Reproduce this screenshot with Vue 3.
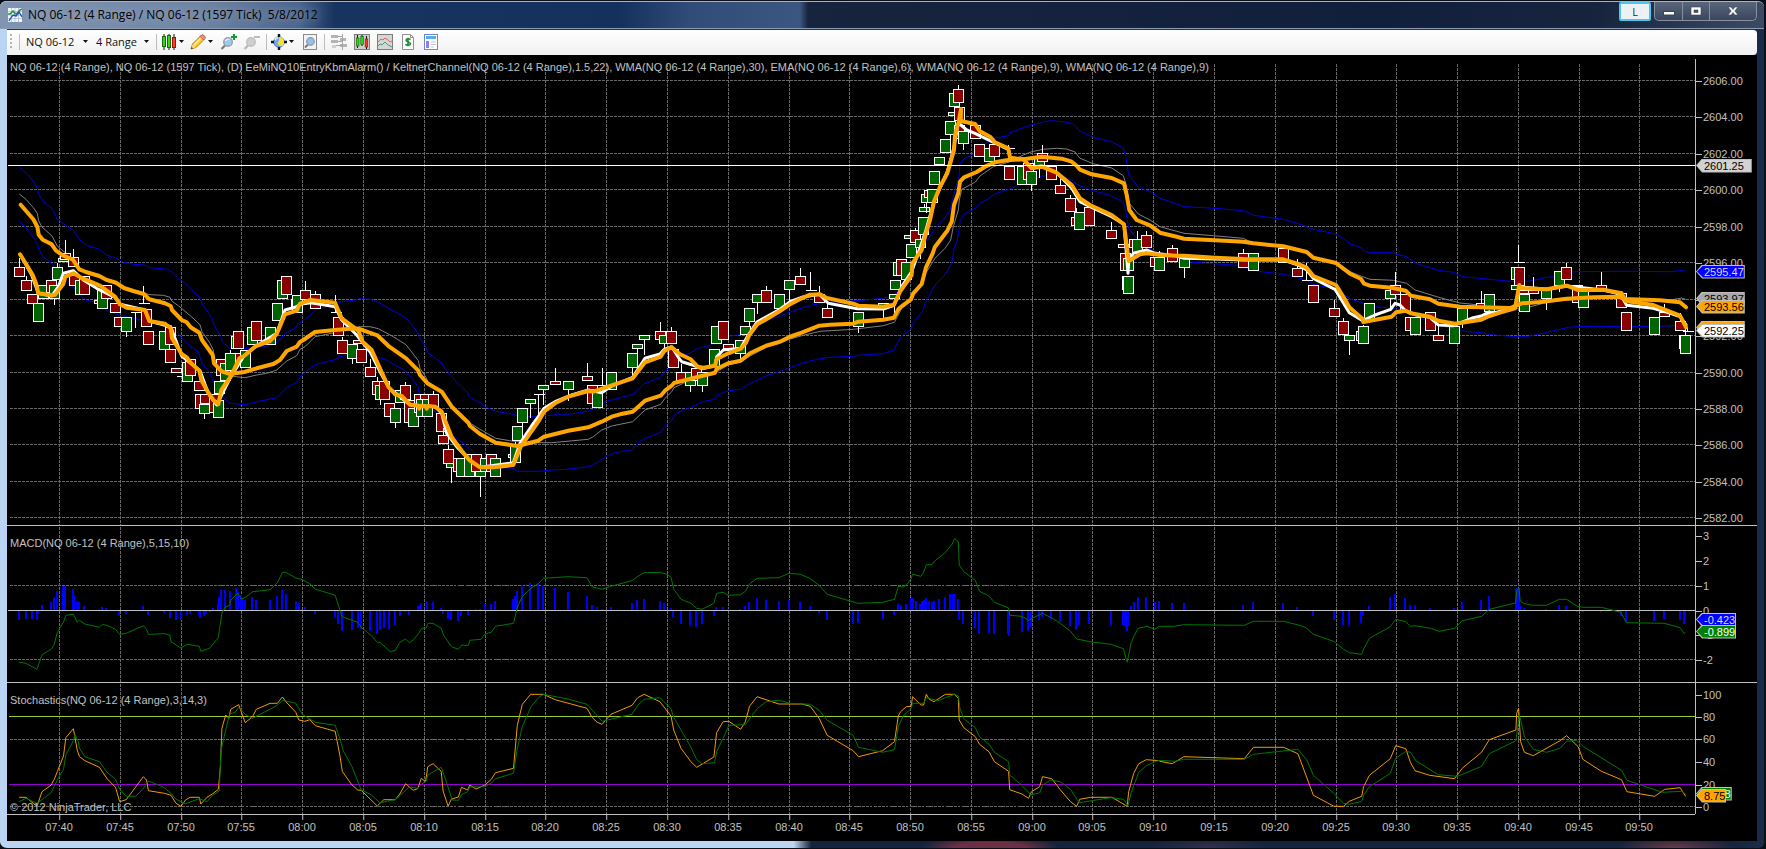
<script setup>
import { ref } from 'vue'

const instrument = ref('NQ 06-12')
const interval = ref('4 Range')

// Chart surface: every panel shares one horizontal scale.
const LEFT = 7
const WIDTH = 1688
const panels = {
  price: { top: 55, height: 470 },
  macd: { top: 525, height: 157 },
  stoch: { top: 682, height: 132 },
}
const box = (p) => `${LEFT - 0.5} ${p.top - 0.5} ${WIDTH} ${p.height}`
const pct = (y, p) => ((y - p.top + 0.5) / p.height) * 100 + '%'

const times = [
  ['07:40', 59], ['07:45', 120], ['07:50', 181], ['07:55', 241], ['08:00', 302], ['08:05', 363],
  ['08:10', 424], ['08:15', 485], ['08:20', 545], ['08:25', 606], ['08:30', 667], ['08:35', 728],
  ['08:40', 789], ['08:45', 849], ['08:50', 910], ['08:55', 971], ['09:00', 1032], ['09:05', 1092],
  ['09:10', 1153], ['09:15', 1214], ['09:20', 1275], ['09:25', 1336], ['09:30', 1396], ['09:35', 1457],
  ['09:40', 1518], ['09:45', 1579], ['09:50', 1639],
]
const timeLeft = (x) => ((x - LEFT) / WIDTH) * 100 + '%'

const priceTicks = [
  ['2606.00', 80], ['2604.00', 116], ['2602.00', 153], ['2600.00', 189], ['2598.00', 226],
  ['2596.00', 262], ['2594.00', 299], ['2592.00', 335], ['2590.00', 372], ['2588.00', 408],
  ['2586.00', 444], ['2584.00', 481], ['2582.00', 517],
]
const macdTicks = [['3', 535], ['2', 560], ['1', 585], ['0', 610], ['-1', 634], ['-2', 659]]
const stochTicks = [['100', 694], ['80', 716], ['60', 739], ['40', 761], ['20', 784], ['0', 806]]

const priceTags = [
  { text: '2601.25', y: 165, tone: 'light wide' },
  { text: '2595.47', y: 271, tone: 'blue' },
  { text: '2593.97', y: 298, tone: 'gray' },
  { text: '2593.56', y: 306, tone: 'orange' },
  { text: '2592.44', y: 327, tone: 'orange' },
  { text: '2592.25', y: 330, tone: 'white' },
]
const macdTags = [
  { text: '-0.423', y: 619, tone: 'blue' },
  { text: '-0.899', y: 631, tone: 'green' },
]
const stochTags = [
  { text: '11.88', y: 793, tone: 'green' },
  { text: '8.75', y: 795, tone: 'orange' },
]

// Series are stored in runs, each with its own origin and horizontal / vertical density.
const runs = {
  a: [0, 160, 3, 3], b: [300, 240, 3, 3], c: [620, 240, 3, 3], d: [860, 70, 3, 3],
  e: [1140, 200, 3, 3], f: [1460, 220, 3, 3],
  p: [0, 520, 2.613, 3], q: [580, 520, 2.613, 3], r: [1160, 520, 2.587, 3],
}
function line(parts) {
  const out = []
  for (const key of Object.keys(parts)) {
    const [ox, oy, kx, ky] = runs[key]
    for (const pair of parts[key].split(' ')) {
      const [x, y] = pair.split(',').map(Number)
      out.push((ox + (x - 1.5) / kx).toFixed(1) + ',' + (oy + (y - 1.5) / ky).toFixed(1))
    }
  }
  return out.join(' ')
}

const upper = line({
  a: '58,22 82,42 100,64 112,84 116,103 130,124 156,146 172,178 200,198 220,210 240,240 258,255 298,268 320,286 345,293 370,306 400,313 435,315 447,323 498,327 512,333 532,354 550,366 572,387 600,413 606,432 638,478 642,495 662,530 668,547 692,566 740,566 800,558 820,552 835,545 845,532 860,518 885,505 895,490',
  b: '0,248 28,228 50,208 75,202 105,188 135,184 162,181 178,176 210,178 235,186 270,207 318,234 335,254 355,280 360,296 378,322 384,338 425,370 440,392 468,424 482,438 503,458 508,470 540,488 555,500 587,514 640,523 652,528 700,530 755,526 770,523 815,522 862,514 885,506 915,486 935,480',
  c: '38,463 75,430 122,412 133,396 150,382 165,365 178,350 210,340 230,326 270,316 290,303 330,288 365,283 385,264 420,245 440,238 470,232 510,216 540,206 580,194 620,188 680,184 760,178 820,170',
  d: '115,660 135,628 150,612 160,590 180,570 195,520 230,470 250,450 270,420 285,360 297,320 300,280 308,270 345,250 365,228 405,204 445,197 450,188 490,173 520,163 540,160 550,155 572,152 610,155 640,162 660,184 700,202 755,215 790,234 797,260 806,314 835,352 870,364 900,385 950,402',
  e: '132,20 225,25 310,32 340,46 430,58 475,71 520,88 588,102 610,116 630,131 665,144 672,153 690,158 752,158 800,170 828,190 895,211 940,217 968,230 1020,235 1080,241',
  f: '150,184 205,184 250,174 290,168 340,155 500,154 630,155 660,152 672,152 677,157',
})
const lower = line({
  a: '58,184 80,205 100,232 112,250 116,268 130,292 150,306 160,318 172,335 190,360 215,375 240,405 258,420 285,426 300,435 320,452 360,466 410,476 440,485 500,498 520,505 535,520 550,540 572,560 595,575 606,610 630,640 642,670 650,700 668,712 690,730 735,734 770,725 830,713 860,683 890,667',
  b: '0,411 20,393 45,374 105,359 115,351 135,347 160,345 190,342 230,350 255,358 280,373 318,393 335,415 355,442 358,470 380,495 425,530 445,560 455,585 485,606 510,628 540,655 590,682 640,685 652,694 720,694 755,690 800,688 865,680 880,675 908,656 935,641',
  c: '0,635 38,629 55,607 75,595 122,577 133,560 155,542 162,526 178,516 210,503 245,486 283,478 290,466 325,452 362,448 390,430 440,407 475,396 508,383 545,370 598,356 630,352 700,349 715,346 790,341 822,329 832,309 845,288 873,267 878,250 908,214 915,190 940,145 945,135 975,105 995,70 1003,25 1012,0',
  d: '297,480 300,455 312,433 345,415 360,400 385,386 405,371 450,357 475,345 510,335 545,318 590,315 620,324 640,335 660,348 700,362 750,376 790,397 797,420 806,475 825,500 850,520 870,535 895,550',
  e: '60,160 132,185 200,190 295,196 345,213 430,223 465,231 500,240 520,253 588,267 610,283 630,297 665,308 680,318 740,323 790,330 830,350 870,365 900,377 940,387 970,394 1024,398 1050,404 1080,406',
  f: '150,349 205,349 250,340 290,330 330,321 400,319 540,320 620,318 670,315',
})
const middle = line({
  a: '58,102 78,118 100,143 112,160 116,182 125,200 156,228 172,258 192,275 220,300 240,328 300,350 345,372 370,388 430,400 450,404 490,406 510,412 515,423 535,437 572,468 600,494 606,515 630,550 640,570 642,595 662,625 690,648 735,653 770,645 800,640 830,630 860,603 890,587',
  b: '0,328 15,320 45,290 105,278 130,270 180,260 210,260 235,266 280,290 318,314 335,336 355,362 360,385 378,412 384,425 425,455 450,490 480,520 508,548 540,568 587,595 640,604 700,608 755,608 865,598 880,590 905,570 935,558',
  c: '0,553 38,545 75,510 122,493 135,475 155,455 162,443 190,430 245,405 285,398 325,375 362,366 390,348 440,322 475,312 508,298 545,287 600,274 700,268 790,257 823,247 832,230 845,205 873,182 878,165 908,130 918,98 945,55 975,25 992,0',
  d: '280,470 295,420 298,390 305,358 345,337 360,318 400,290 450,275 490,255 515,245 550,238 590,235 620,237 645,246 660,265 700,281 755,294 790,317 797,340 808,400 835,432 870,450 900,470 950,484',
  e: '132,100 220,107 310,115 340,130 430,140 500,158 520,172 588,190 630,215 665,229 690,238 760,241 800,250 825,270 900,293 960,309 1010,314 1080,323',
  f: '150,265 200,263 250,250 300,242 350,238 480,233 560,240 630,240 665,234 677,238',
})
const slow = line({
  a: '62,134 100,178 112,200 116,224 128,239 155,253 168,272 190,287 218,298 238,328 258,336 298,348 320,360 348,368 372,384 400,393 432,402 448,418 495,430 512,438 516,450 545,480 560,487 572,502 598,518 606,540 638,585 642,610 665,634 690,642 733,636 770,625 820,612 840,600 860,573 890,560',
  b: '0,306 10,300 45,276 105,270 150,266 175,266 232,286 268,320 318,355 355,392 360,405 382,430 425,455 455,500 505,548 510,558 540,582 587,608 652,618 715,602 732,590 805,572 865,562 905,545 935,530',
  c: '0,523 38,515 75,482 122,467 135,452 155,437 162,429 230,412 285,398 290,386 325,370 362,362 390,340 438,317 480,305 508,291 545,278 598,257 630,254 700,251 715,245 790,239 822,233 835,208 845,199 873,178 880,160 905,132',
  d: '198,592 218,550 224,532 262,482 275,455 282,405 295,370 300,335 312,322 350,306 375,290 405,277 440,271 490,268 545,260 605,266 635,275 650,287 660,299 695,313 755,324 792,340 800,375 808,420 830,450 870,466 900,488 950,500',
  e: '132,116 225,121 310,125 340,130 430,139 500,156 520,173 588,189 630,221 662,236 672,251 690,257 755,263 797,272 812,287 870,298 895,311 960,320 1080,323',
  f: '150,264 185,250 240,246 320,236 400,232 475,230 495,237 600,241 660,247 678,262',
})
const fast = line({
  a: '60,283 80,315 98,345 108,370 115,400 155,406 165,404 190,372 196,350 220,340 250,356 300,377 345,410 360,433 380,443 435,450 448,483 495,491 512,505 516,535 545,582 560,592 572,608 598,632 604,660 625,698 640,720 655,733 664,690 692,650 718,595 732,588 768,558 810,543 830,522 855,463 890,452',
  b: '0,191 32,180 105,188 125,235 175,272 188,305 215,330 265,440 285,463 305,468 330,494 355,497 358,506 362,497 378,500 380,506 384,498 405,500 425,515 455,592 485,632 508,660 540,682 580,682 640,675 662,620 715,545 732,515 765,490 805,470 865,453 880,455 915,443',
  c: '38,415 75,367 122,350 133,333 155,322 180,343 212,358 233,380 250,383 285,377 290,357 325,340 362,326 378,308 388,285 412,253 440,237 480,213 510,193 545,175 570,164 600,163 620,174 700,191 715,197 790,200 822,194',
  d: '120,665 155,615 157,580 185,540 195,500 210,450 222,395 240,350 262,310 272,275 282,240 285,195 296,155 303,117 302,153 345,162 360,184 390,200 405,217 445,235 450,263 490,268 515,295 545,290 590,308 635,345 660,385 690,405 755,435 792,463 798,510 806,573 840,553 860,550 900,555 950,557',
  e: '132,167 225,173 310,177 430,178 475,192 500,203 520,228 588,255 610,290 628,322 668,357 670,366 755,350 768,337 797,332 812,340 870,350 895,362 945,371 1024,359 1048,348 1080,338',
  f: '165,265 178,195 183,204 260,208 320,197 355,210 430,209 485,220 497,243 580,255 660,287 678,322',
})
const weighted = line({
  a: '60,283 95,345 115,400 155,408 175,380 190,340 220,332 250,360 290,385 345,412 360,433 435,450 448,483 512,500 545,588 600,632 625,700 650,735 690,655 732,588 768,558 830,520 855,450 890,440',
  b: '0,193 32,188 75,195 105,200 125,240 170,285 210,335 240,395 268,445 330,494 405,500 425,520 440,580 470,620 508,660 540,682 590,675 640,668 660,610 700,550 715,530 732,505 765,485 815,465 865,450 905,458 935,438',
  c: '38,412 75,355 120,342 133,328 155,320 175,352 185,365 215,374 245,386 285,377 290,350 310,330 362,325 385,285 412,245 480,208 510,185 545,172 598,163 625,190 712,206 790,207 822,196',
  d: '125,650 155,605 195,490 222,395 262,305 280,240 295,160 303,165 320,180 345,190 390,212 445,238 450,263 490,268 515,292 545,288 590,308 635,355 660,395 690,410 755,440 792,463 804,610 806,575 820,550 860,540 885,550 950,558',
  e: '132,175 225,177 310,180 430,180 475,195 500,210 520,235 585,268 628,338 668,362 705,345 752,328 765,310 780,315 797,333 830,345 870,352 895,375 940,377 1000,353 1024,348 1048,335',
  f: '80,285 165,262 178,200 260,208 320,198 430,210 480,222 500,256 580,265 615,275 660,290 680,318',
})

// Bars: centre, open/close edges, direction, optional wick top (^) and wick bottom (_).
const bars = {
  a: '58,321,350,r,^290 80,361,392,r,^346 98,402,432,r 115,429,486,g 130,375,418,g 153,361,400,r 163,375,418,g,_432 172,321,361,g,^306 190,295,307,g 197,280,300,r,^237 220,290,322,r,^264 223,345,377,r 240,361,404,g 254,348,404,r 298,419,432,r 307,390,446,g 320,375,418,r 346,429,459,r 358,472,500,r 380,472,515,g,_527 407,456,459,g,_500 430,430,433,g,^375 440,446,500,r 446,513,554,r 493,513,569,g 512,500,554,r 511,568,608,r 529,623,638,r 545,649,652,g 561,607,665,g 572,596,649,r 598,664,692,r 602,703,746,r 613,732,762,g,_774 617,703,732,r 642,703,760,r 656,720,773,g 665,596,649,r 677,610,664,g 658,664,703,g 691,580,634,g,^566 722,580,610,r 736,570,623,g 709,527,568,g 715,513,568,r 757,500,554,g 769,484,542,r 811,500,554,g 832,430,484,g 847,361,418,g 860,348,404,r 888,418,446,r 892,404,458,g 916,392,418,r,^361',
  b: '17,151,180,r,^120 46,163,206,r,^150 106,217,220,g,^162 116,232,287,r 127,300,342,r,^287 157,313,356,g,_368 175,300,313,r 185,328,368,r 211,381,410,r,^354 232,424,465,r,^408 240,436,480,g,_491 253,424,480,r 269,489,532,r 302,450,489,g 287,504,548,g,_560 329,480,548,r 317,436,480,r,^422 340,504,560,g 358,463,520,r 375,463,500,r 364,477,532,g 383,477,532,g 400,463,500,r,^450 423,520,575,r 430,586,613,r,^560 454,670,683,g,_725 445,628,672,r,^613 476,655,697,r 484,655,710,g 508,643,710,g 541,685,710,g,_768 530,643,697,r 556,655,697,g 575,643,697,r 587,655,710,g 639,643,655,r 647,616,670,g,^602 652,559,602,g 667,505,548,g,_560 691,478,491,g,_532 715,463,466,g,_520 730,436,451,g,_491 766,424,436,r,^381 805,424,451,g,_480 862,408,424,r,^366 907,436,439,g,^381 877,436,491,r 892,448,505,g 935,397,451,g 997,339,383,g,_410 1012,313,328,g,_339 1033,286,301,g,_342',
  c: '121,273,301,r,^243 133,286,313,g,_325 155,273,313,r,^258 160,328,383,r 184,397,424,r,^370 211,397,437,g,_452 230,383,424,r 247,397,437,g,_452 283,328,380,g 289,258,313,g 310,244,301,r 325,313,328,r 361,301,342,g,_356 376,258,286,g 388,205,245,g,_258 412,163,190,g,_219 440,151,190,r,^135 478,163,206,g 508,121,151,g,_190 541,108,136,r,^81 571,151,154,g,^93 598,163,190,r,^135 622,205,233,r,^190 715,217,260,g,_275 790,190,200,g,_233',
  d: '103,673,688,g,_740 106,631,661,g 115,577,619,g 124,567,619,r 140,577,631,g 148,496,508,g 155,523,565,g 167,481,520,r,^470 181,508,535,g,_565 190,442,496,g 193,411,426,g,^400 199,373,400,g,_426 207,360,385,r 217,358,400,g 223,304,346,g 238,262,286,g 256,208,250,g 270,154,196,g,_208 279,127,139,g 283,69,112,g 295,57,100,r,^42 299,165,208,r 299,112,154,r 310,182,223,g,_236 346,165,208,r,^154 358,223,262,r 388,235,277,g 404,223,262,r 445,235,238,g,^223 448,289,331,r 487,289,346,g 505,280,331,r 515,304,346,g,_360 538,262,289,g,_320 547,250,277,r,^223 575,289,331,r 601,346,373,r,^325 631,385,427,r,^371 649,442,469,r,^412 689,412,469,r 658,427,481,g 755,481,508,r,^454 790,523,535,r 823,508,535,r 832,508,550,g,^481 859,496,535,r,^480 795,550,604,r 806,565,604,g 803,619,661,g 805,619,673,g 885,562,592,r 898,562,604,g,^540 937,535,577,r,^521',
  e: '133,175,203,g,_230 310,160,203,r,^145 341,160,214,g 430,145,188,r,^132 472,203,230,r,^175 500,241,244,g,^187 520,256,310,r 583,325,352,r,^297 610,364,406,r,^350 628,406,422,g,_461 665,394,422,r 670,379,433,g,^372 688,310,366,g 751,271,298,g,_330 767,256,285,r,^214 797,283,337,r 811,350,394,r 826,352,406,g 871,337,394,r 895,406,422,r,^375 943,379,433,g 968,325,365,g,_380 1024,310,322,r,^270 1048,283,337,g',
  f: '168,142,180,g 168,196,211,g 175,127,130,g,^72 179,142,197,r 190,209,222,r 194,222,277,g 221,209,222,r,^169 260,205,238,g,_266 298,154,197,g,_212 320,142,181,r,^127 352,196,250,r 371,211,265,g 424,196,211,r,^154 485,220,265,r,^210 500,277,334,r 583,292,346,g 614,277,292,r,^248 660,304,334,r,^275 683,334,337,g,^320 674,346,388,g 677,346,401,g,^325',
}
const candles = []
for (const key of Object.keys(bars)) {
  const [ox, oy] = runs[key]
  for (const item of bars[key].split(' ')) {
    const [cx, top, bottom, dir, wick] = item.split(',')
    const x = ox + Math.floor(cx / 3)
    const y = oy + Math.round(top / 3)
    const h = Math.max(0, oy + Math.round(bottom / 3) - y - 1)
    const end = wick ? oy + Math.round(wick.slice(1) / 3) : 0
    candles.push({ x, y, h, dir, wick: wick ? (wick[0] === '^' ? [end, y] : [y + h, end]) : null })
  }
}

const histogramData = {
  p: '50,299 68,297 83,297 97,299 99,282 109,255 134,246 142,231 149,213 165,197 169,197 190,207 194,228 202,243 207,246 220,258 259,267 266,262 277,264 302,273 311,285 330,281 374,258 387,285 429,279 444,293 460,299 473,299 489,285 497,281 520,285 523,293 533,288 539,282 549,276 557,264 570,252 573,231 578,210 588,210 600,213 616,205 622,216 631,225 633,237 641,240 659,231 669,240 706,240 725,228 737,209 747,222 774,243 780,250 797,262 824,281 876,291 884,312 894,333 920,330 936,324 944,327 967,333 986,342 993,330 1003,324 1017,327 1032,315 1045,288 1058,276 1069,285 1080,273 1092,258 1096,258 1101,249 1116,243 1132,247 1153,264 1158,281 1171,297 1178,299 1196,303 1205,288 1222,285 1226,268 1244,267 1255,267 1267,252 1284,252 1293,243 1341,237 1345,228 1351,213 1364,196 1385,189 1406,192 1418,195 1451,205 1484,216 1534,228 1547,256 1560,262',
  q: '58,267 81,262 136,249 149,240 168,237 209,243 219,249 237,264 243,291 264,312 287,315 303,321 319,312 350,288 355,262 374,262 386,268 418,268 431,258 441,246 463,234 487,240 520,243 547,240 575,246 601,258 624,279 646,299 714,312 726,309 791,297 821,285 830,252 838,255 852,252 865,235 869,234 878,243 888,252 894,243 899,240 904,234 912,243 920,246 925,243 938,237 953,231 966,222 974,222 977,222 988,237 991,299 1001,312 1033,324 1042,342 1069,339 1082,342 1118,342 1122,348 1155,336 1170,333 1178,321 1200,299 1207,291 1230,297 1254,306 1280,318 1297,330 1304,315 1330,312 1387,315 1418,315 1422,318 1426,323 1430,333 1433,315 1440,258 1447,246 1459,231 1480,231 1502,246 1513,243 1547,249',
  r: '62,249 214,255 240,246 318,249 354,261 395,288 450,299 473,315 489,315 520,309 525,288 541,258 595,231 608,222 635,234 647,255 659,255 698,264 719,273 760,264 781,246 830,240 851,228 921,207 924,205 928,205 932,258 941,264 998,268 1033,255 1050,258 1078,276 1094,276 1140,276 1192,288 1205,306 1278,303 1304,297 1346,299 1355,312 1358,299',
}
const histogram = []
for (const key of Object.keys(histogramData)) {
  const [ox, oy, kx] = runs[key]
  for (const item of histogramData[key].split(' ')) {
    const [x, y] = item.split(',').map(Number)
    const end = oy + Math.round(y / 3)
    histogram.push({ x: Math.round(ox + x / kx) - 1.5, y: Math.min(end, 610) - 0.5, h: Math.max(1, Math.abs(end - 610)) })
  }
}

const macd = line({
  p: '50,427 68,430 97,448 110,404 134,388 142,373 150,337 166,306 172,286 192,283 202,307 208,301 222,312 260,322 268,313 282,317 302,328 313,343 330,340 375,317 383,328 388,343 430,341 444,345 447,365 473,384 490,373 521,379 525,394 548,385 571,353 574,325 580,280 588,262 600,256 604,240 621,220 631,237 642,232 660,215 706,209 725,188 738,157 747,157 773,174 790,179 808,190 824,207 876,226 894,290 935,307 944,322 970,346 986,367 993,367 1020,395 1033,391 1045,367 1060,357 1070,368 1080,360 1095,339 1102,325 1114,324 1118,310 1132,310 1153,325 1160,347 1180,380 1198,388 1206,376 1224,376 1228,361 1257,358 1267,342 1284,337 1295,319 1342,310 1352,262 1365,229 1390,203 1407,191 1420,175 1484,170 1534,173 1547,200 1568,207',
  q: '58,208 81,199 136,182 150,170 168,158 209,157 228,163 238,172 245,207 264,238 290,250 305,265 319,268 350,250 357,220 374,217 387,226 420,224 432,214 443,192 463,175 520,173 546,160 577,163 602,176 625,196 646,223 726,250 791,247 822,238 832,199 845,201 855,193 866,175 869,163 891,169 898,157 905,134 920,134 927,123 953,100 973,72 979,56 989,65 991,135 1003,155 1033,181 1044,214 1069,228 1083,247 1120,264 1123,286 1155,289 1172,301 1208,280 1233,294 1255,310 1282,334 1298,357 1333,365 1387,373 1420,386 1430,427 1440,370 1447,350 1459,325 1482,319 1502,328 1513,319',
  r: '0,319 36,319 62,314 218,316 242,304 320,304 358,315 378,323 397,343 452,365 475,388 490,398 522,403 527,387 542,355 596,320 610,298 636,305 648,319 660,317 700,325 722,334 762,325 782,302 832,289 852,268 920,249 924,210 929,205 932,243 940,250 965,256 1000,256 1033,238 1052,238 1080,259 1094,262 1142,262 1192,277 1207,308 1305,310 1346,323 1356,341 1360,337',
})
const stochK = line({
  p: '50,832 68,832 97,859 110,815 134,795 142,778 150,755 166,708 172,653 192,626 202,690 208,710 222,722 260,742 280,776 302,802 313,845 330,839 375,770 383,780 388,812 430,820 447,826 460,850 473,859 485,840 497,832 521,832 525,852 541,832 555,822 571,808 576,740 580,625 590,585 598,595 603,568 624,554 641,608 660,590 670,568 706,550 725,550 738,531 748,546 773,577 781,600 797,604 810,599 824,617 876,634 888,705 895,755 920,795 935,810 944,811 986,858 1003,839 1033,839 1045,822 1060,791 1080,811 1092,806 1101,775 1112,785 1118,740 1132,731 1153,754 1158,813 1171,858 1180,837 1198,831 1206,802 1222,810 1228,795 1244,807 1267,795 1284,778 1295,758 1342,745 1352,616 1365,553 1387,523 1420,523 1451,539 1534,565 1547,592',
  q: '45,607 58,613 81,583 136,556 151,533 168,523 209,545 238,588 245,630 264,685 290,725 305,742 350,711 357,638 374,605 389,604 420,628 432,605 443,559 463,530 520,552 580,552 602,559 625,595 646,646 714,692 728,710 791,692 822,665 832,588 838,575 853,560 866,559 869,530 891,555 898,555 905,523 912,537 925,545 955,523 979,523 989,535 991,600 1003,623 1033,650 1044,673 1069,695 1083,725 1120,754 1123,809 1155,822 1172,835 1180,815 1201,800 1209,770 1233,776 1255,809 1282,845 1298,859 1306,838 1335,832 1390,832 1430,859 1434,815 1447,760 1460,731 1480,719 1515,722',
  r: '0,724 32,731 62,710 218,716 242,682 320,682 357,701 397,826 450,859 475,859 490,844 522,829 527,800 542,766 596,716 610,677 636,686 648,727 660,752 698,766 762,776 782,745 832,697 852,659 921,630 923,580 928,565 933,665 943,697 966,707 1035,662 1052,647 1082,680 1094,718 1142,754 1194,779 1208,815 1280,829 1306,808 1346,803 1360,829',
})
const stochD = line({
  p: '50,845 68,835 97,850 134,818 150,780 166,748 172,705 192,662 196,643 205,665 208,685 222,710 260,725 280,757 302,778 313,808 330,829 355,829 375,805 388,783 430,803 447,820 460,838 485,851 521,836 541,845 555,827 573,813 578,690 590,630 600,583 615,576 624,562 641,583 660,595 725,556 738,541 773,550 790,583 824,607 876,616 888,655 897,692 920,740 944,810 970,824 993,848 1033,839 1070,801 1092,805 1101,793 1114,783 1118,765 1153,742 1158,757 1182,840 1198,841 1206,824 1222,815 1228,801 1267,800 1284,790 1295,776 1342,760 1352,685 1365,620 1387,562 1407,533 1420,523 1484,537 1534,553',
  q: '58,604 136,583 151,556 168,538 209,533 238,566 245,592 290,682 305,719 319,731 352,728 357,695 374,655 389,616 432,614 463,566 487,545 520,541 550,550 602,553 625,571 646,601 714,646 728,682 791,697 822,689 832,620 845,587 866,565 869,550 898,550 905,533 935,542 955,533 979,523 989,528 993,565 1003,596 1033,623 1044,650 1069,673 1083,697 1120,725 1123,765 1155,796 1178,824 1201,819 1209,796 1230,780 1255,785 1282,808 1304,848 1387,833 1420,838 1432,857 1440,820 1460,757 1480,737 1502,725 1515,721',
  r: '0,721 40,724 62,718 218,718 242,703 357,688 380,720 397,766 452,822 475,850 490,853 522,844 527,825 542,800 596,760 610,715 636,694 648,697 662,722 720,764 770,769 832,739 852,701 921,662 930,583 943,650 966,688 1000,697 1035,685 1052,664 1078,661 1096,680 1194,751 1208,781 1300,817 1350,814 1360,822',
})
</script>

<template>
  <main class="window">
    <header class="titlebar">
      <svg class="app-icon" viewBox="0 0 14 14" aria-hidden="true">
        <rect width="14" height="14" fill="#f4f6fb" />
        <path d="M3.500 0v14M7 0v14M10.500 0v14M0 3.500h14M0 7h14M0 10.500h14" stroke="#a9b3d6" stroke-width=".7" />
        <path d="M0 6h2l3-3 2 2.500h2L12 2l2-1" stroke="#1c9a3f" stroke-width="1.600" fill="none" />
        <path d="M1 13l3-5 2-1 2 1 3-4 3 5" stroke="#2450b4" stroke-width="1.400" fill="none" />
      </svg>
      <h1 class="title">NQ 06-12 (4 Range) / NQ 06-12 (1597 Tick)&nbsp; 5/8/2012</h1>
      <button class="link-button" type="button">L</button>
      <div class="controls">
        <button class="min" type="button" aria-label="Minimize">
          <svg width="12" height="10" viewBox="0 0 12 10"><rect x=".5" y="5.500" width="11" height="3.500" fill="#fff" stroke="#3c4352" /></svg>
        </button>
        <button class="max" type="button" aria-label="Maximize">
          <svg width="12" height="10" viewBox="0 0 12 10"><path fill-rule="evenodd" d="M1 1h10v8H1zM4 4v2.500h4V4z" fill="#fff" stroke="#3c4352" stroke-width=".6" /></svg>
        </button>
        <button class="close" type="button" aria-label="Close">
          <svg width="12" height="10" viewBox="0 0 12 10"><path d="M1 1h3l2 2.500L8 1h3L7.800 5 11 9H8L6 6.500 4 9H1l3.200-4z" fill="#fff" stroke="#3c4352" stroke-width=".6" /></svg>
        </button>
      </div>
    </header>

    <nav class="toolbar" aria-label="Chart tools">
      <span class="grip"></span>
      <span class="sep"></span>
      <label class="pick pick-instrument">
        <select v-model="instrument" aria-label="Instrument"><option>NQ 06-12</option></select>
        <span class="caret"></span>
      </label>
      <label class="pick pick-interval">
        <select v-model="interval" aria-label="Interval"><option>4 Range</option></select>
        <span class="caret"></span>
      </label>
      <span class="sep"></span>
      <button class="tool split" type="button" aria-label="Chart style">
        <svg viewBox="0 0 16 16">
          <path d="M3 0v16M8 0v16M13 0v16" stroke="#111" />
          <rect x="1.500" y="2.500" width="3" height="10" fill="#35d51d" stroke="#176b10" />
          <rect x="6.500" y="1.500" width="3" height="12" fill="#35d51d" stroke="#176b10" />
          <rect x="11.500" y="3.500" width="3" height="10" fill="#f5402c" stroke="#9c1408" />
        </svg>
        <span class="caret"></span>
      </button>
      <button class="tool split" type="button" aria-label="Drawing tools">
        <svg viewBox="0 0 16 16">
          <path d="M1 15l1.500-5L11 1.500 14.500 5 6 13.500z" fill="#ffcf22" stroke="#b97a10" />
          <path d="M4 11l8-8" stroke="#fff2a0" stroke-width="1.500" />
          <path d="M10 2.500l1.500-1.500a1.500 1.500 0 0 1 2 0l1.500 1.500a1.500 1.500 0 0 1 0 2L13.500 6z" fill="#e88f86" stroke="#a34d33" stroke-width=".7" />
          <path d="M1 15l1.300-4.500 3.200 3.200z" fill="#f3d7a3" />
          <path d="M1 15l.6-2 1.500 1.500z" fill="#222" />
        </svg>
        <span class="caret"></span>
      </button>
      <button class="tool" type="button" aria-label="Zoom in">
        <svg viewBox="0 0 16 16">
          <path d="M0.500 15L4.500 11" stroke="#777" stroke-width="2.200" />
          <circle cx="7" cy="8" r="4.300" fill="#9cc9ee" stroke="#9aa0a8" stroke-width="1.400" />
          <path d="M4.500 7a3 3 0 0 1 4-1.500" stroke="#e2f2ff" stroke-width="1.300" fill="none" />
          <path d="M13 0v6M10 3h6" stroke="#12a02a" stroke-width="2" />
        </svg>
      </button>
      <button class="tool" type="button" aria-label="Zoom out" disabled>
        <svg viewBox="0 0 16 16">
          <path d="M0.500 15L4.500 11" stroke="#b5b5b5" stroke-width="2.200" />
          <circle cx="7" cy="8" r="4.300" fill="#cfcfcf" stroke="#c0c0c0" stroke-width="1.400" />
          <path d="M10 3h6" stroke="#bdbdbd" stroke-width="2" />
        </svg>
      </button>
      <span class="sep"></span>
      <button class="tool split" type="button" aria-label="Crosshair">
        <svg viewBox="0 0 16 16">
          <circle cx="8" cy="8" r="5.300" fill="#7aa9e8" stroke="#3a5fa8" stroke-width=".8" />
          <path d="M8 2.700a5.300 5.300 0 0 1 3 9.600C7 12 6 9 8 7z" fill="#f1e03c" />
          <path d="M4 6a4 4 0 0 1 3-2.500" stroke="#dcecff" stroke-width="1.500" fill="none" />
          <path d="M8 0v3M8 13v3M0 8h3M13 8h3" stroke="#111" stroke-width="2.400" />
        </svg>
        <span class="caret"></span>
      </button>
      <button class="tool" type="button" aria-label="Zoom to data">
        <svg viewBox="0 0 16 16">
          <rect x="1.500" y=".5" width="13" height="15" fill="#f2f2f2" stroke="#8b8b8b" />
          <path d="M3 13.500l3-3" stroke="#777" stroke-width="2" />
          <circle cx="8.500" cy="7.500" r="3.800" fill="#8fc2ec" stroke="#8d98a5" stroke-width="1.200" />
        </svg>
      </button>
      <span class="sep"></span>
      <button class="tool" type="button" aria-label="Chart trader" disabled>
        <svg viewBox="0 0 16 16">
          <path d="M0 1h7v3H0zM9 4h6v3H9zM0 6h7v3H0zM9 10h7v3H9z" fill="#b4b4b4" />
          <path d="M7 2.500h4.500M7 7.500h4.500M5 11.500h6M11.500 0v16" stroke="#a6a6a6" />
          <path d="M1 11h4v3H1z" fill="#d0d0d0" />
        </svg>
      </button>
      <button class="tool" type="button" aria-label="Data series">
        <svg viewBox="0 0 16 16">
          <rect x=".5" y=".5" width="15" height="15" fill="#cdcdcd" stroke="#7d7d7d" />
          <path d="M3.500 1v13M8 1v11M12.500 2v13" stroke="#111" />
          <rect x="2.500" y="4" width="2.500" height="8" fill="#35d51d" stroke="#176b10" stroke-width=".7" />
          <rect x="6.800" y="2.500" width="2.500" height="8" fill="#35d51d" stroke="#176b10" stroke-width=".7" />
          <rect x="11.200" y="5" width="2.500" height="8" fill="#f5402c" stroke="#9c1408" stroke-width=".7" />
        </svg>
      </button>
      <button class="tool" type="button" aria-label="Indicators">
        <svg viewBox="0 0 16 16">
          <rect x=".5" y=".5" width="15" height="15" fill="#d6d6d6" stroke="#7d7d7d" />
          <path d="M1 8l3-3 2 1 2-2 3 2 2 2 2-1" stroke="#e06464" fill="none" />
          <path d="M1 12l2-2 2 1 3-3 3 3 4 2" stroke="#3fa36b" fill="none" />
        </svg>
      </button>
      <button class="tool" type="button" aria-label="Strategies">
        <svg viewBox="0 0 16 16">
          <path d="M2.500.5h8l3 3v12h-11z" fill="#fff" stroke="#909090" />
          <path d="M10.500.5v3h3" fill="none" stroke="#909090" />
          <path d="M10.500 5.500c-1-1.200-4.500-1-4.500.8S10.500 8 10.500 9.800 6.500 11.700 5.500 10.300M8 3.800v8.500" fill="none" stroke="#168a2a" stroke-width="1.500" />
        </svg>
      </button>
      <button class="tool" type="button" aria-label="Properties">
        <svg viewBox="0 0 16 16">
          <rect x="1.500" y=".5" width="13" height="15" fill="#fff" stroke="#6f86c8" />
          <path d="M3 2h10v3H3z" fill="#58aee8" />
          <path d="M4.500 7v7" stroke="#8f7ff0" stroke-width="3" />
          <path d="M8 8h5M8 10.500h5M8 13h3" stroke="#b9c4dd" />
        </svg>
      </button>
    </nav>

    <section class="chart" aria-label="Chart">
      <div class="panel">
        <svg class="plot" :viewBox="box(panels.price)" preserveAspectRatio="none">
          <g class="grid">
            <path v-for="t in times" :key="t[0]" :d="`M${t[1]} 63V525`" />
            <path v-for="t in priceTicks" :key="t[0]" :d="`M9 ${t[1]}H1694`" />
          </g>
          <polyline class="band" :points="upper" />
          <polyline class="band" :points="lower" />
          <polyline class="mid" :points="middle" />
          <g v-for="(c, i) in candles" :key="i" class="candle">
            <path v-if="c.wick" :d="`M${c.x} ${c.wick[0]}V${c.wick[1]}`" />
            <rect v-if="c.h > 0" :class="c.dir" :x="c.x - 5" :y="c.y" width="10" :height="c.h" />
            <path v-else :d="`M${c.x - 5} ${c.y}H${c.x + 6}`" />
          </g>
          <polyline class="weighted" :points="weighted" />
          <polyline class="average" :points="slow" />
          <polyline class="average" :points="fast" />
          <path class="level" d="M7 165H1695" />
        </svg>
        <p class="caption">NQ 06-12 (4 Range), NQ 06-12 (1597 Tick), (D) EeMiNQ10EntryKbmAlarm() / KeltnerChannel(NQ 06-12 (4 Range),1.5,22), WMA(NQ 06-12 (4 Range),30), EMA(NQ 06-12 (4 Range),6), WMA(NQ 06-12 (4 Range),9), WMA(NQ 06-12 (4 Range),9)</p>
      </div>
      <div class="axis axis-first">
        <span v-for="t in priceTicks" :key="t[0]" class="tick" :style="{ top: pct(t[1], panels.price) }">{{ t[0] }}</span>
        <span v-for="t in priceTags" :key="t.text" class="tag" :class="t.tone" :style="{ top: pct(t.y, panels.price) }"><b>{{ t.text }}</b></span>
      </div>

      <div class="panel ruled">
        <svg class="plot" :viewBox="box(panels.macd)" preserveAspectRatio="none">
          <g class="grid">
            <path v-for="t in times" :key="t[0]" :d="`M${t[1]} 526V682`" />
            <path d="M9 585H1694M9 659H1694" />
          </g>
          <rect v-for="(b, i) in histogram" :key="i" class="bar" :x="b.x" :y="b.y" width="2" :height="b.h" />
          <path class="zero" d="M7 610H1695" />
          <polyline class="green-line" :points="macd" />
        </svg>
        <p class="caption caption-lower">MACD(NQ 06-12 (4 Range),5,15,10)</p>
      </div>
      <div class="axis ruled">
        <span v-for="t in macdTicks" :key="t[0]" class="tick" :style="{ top: pct(t[1], panels.macd) }">{{ t[0] }}</span>
        <span v-for="t in macdTags" :key="t.text" class="tag" :class="t.tone" :style="{ top: pct(t.y, panels.macd) }"><b>{{ t.text }}</b></span>
      </div>

      <div class="panel ruled">
        <svg class="plot" :viewBox="box(panels.stoch)" preserveAspectRatio="none">
          <g class="grid">
            <path v-for="t in times" :key="t[0]" :d="`M${t[1]} 683V814`" />
            <path d="M9 739H1694M9 806H1694" />
          </g>
          <path class="overbought" d="M8 716H1695" />
          <path class="oversold" d="M8 784H1695" />
          <polyline class="orange-line" :points="stochK" />
          <polyline class="green-line" :points="stochD" />
        </svg>
        <p class="caption caption-lower">Stochastics(NQ 06-12 (4 Range),3,14,3)</p>
        <p class="caption copyright">© 2012 NinjaTrader, LLC</p>
      </div>
      <div class="axis ruled">
        <span v-for="t in stochTicks" :key="t[0]" class="tick" :style="{ top: pct(t[1], panels.stoch) }">{{ t[0] }}</span>
        <span v-for="t in stochTags" :key="t.text" class="tag" :class="t.tone" :style="{ top: pct(t.y, panels.stoch) }"><b>{{ t.text }}</b></span>
      </div>

      <div class="times ruled">
        <span v-for="t in times" :key="t[0]" class="time" :style="{ left: timeLeft(t[1]) }">{{ t[0] }}</span>
      </div>
    </section>
  </main>
</template>

<style>
body {
  background: #0b0d14;
}
</style>

<style scoped>
* {
  box-sizing: border-box;
}
.window {
  display: flex;
  flex-direction: column;
  min-height: 100vh;
  padding: 0 7px 7px;
  border: solid #0c0f16;
  border-width: 1px 2px 1px 0;
  border-radius: 7px;
  background:
    radial-gradient(ellipse 70px 12px at 990px 100%, #6b2f46 0 50%, transparent),
    radial-gradient(ellipse 60px 12px at 1210px 100%, #33304a, transparent),
    radial-gradient(ellipse 60px 12px at 1675px 100%, #6b3a48, transparent),
    linear-gradient(to right, #bcd4f4 0 45%, #13233c 46% 98%, #1b2c4c);
  font-family: "Liberation Sans", Arial, sans-serif;
  font-size: 11px;
}
.titlebar {
  display: flex;
  align-items: center;
  height: 28px;
  margin: 0 -7px;
  padding: 0 0 0 8px;
  border-top: 1px solid #a6b3c9;
  border-bottom: 1px solid #8d9db8;
  border-radius: 6px 6px 0 0;
  background:
    linear-gradient(to right, #8195b1 0, #6f84a4 200px, #4a648c 300px, #17335f 335px, #14305c 620px, #314c78 690px, #3b5680 800px, #17243e 808px, #101f3c 1380px, #17243e 1600px, #3c4b63);
}
.app-icon {
  width: 14px;
  height: 14px;
}
.title {
  flex: 1;
  margin: 0 0 0 6px;
  color: #000;
  font: 400 12px/20px "Open Sans", sans-serif;
  text-shadow: 0 0 8px #a9b9d0;
  white-space: nowrap;
}
.link-button {
  align-self: flex-start;
  width: 32px;
  height: 19px;
  padding: 0;
  border: 2px solid #4cc6ee;
  border-radius: 2px;
  background: #eef1f4;
  color: #1c2b50;
  font: 11px/14px "Open Sans", sans-serif;
}
.controls {
  display: flex;
  align-self: flex-start;
  width: 103px;
  height: 19px;
  margin: 0 7px 0 3px;
  border: 1px solid #8790a0;
  border-top: 0;
  border-radius: 0 0 5px 5px;
  background: linear-gradient(#5a667c, #39465d);
}
.controls button {
  display: grid;
  place-items: center;
  padding: 0;
  border: 0;
  border-right: 1px solid #8790a0;
  background: none;
}
.controls .min {
  width: 28px;
}
.controls .max {
  width: 27px;
}
.controls .close {
  flex: 1;
  border-right: 0;
}
.toolbar {
  display: flex;
  align-items: center;
  height: 26px;
  padding-bottom: 2px;
  border-top: 1px solid #26303f;
  border-radius: 0 4px 4px 0;
  background: linear-gradient(#fff, #f0f0f0);
}
.grip {
  width: 2px;
  height: 16px;
  margin: 0 4px 0 3px;
  background: repeating-linear-gradient(#b4b4b4 0 2px, transparent 2px 4px);
}
.sep {
  width: 1px;
  height: 16px;
  margin: 0 2px 0 3px;
  background: #bdbdbd;
}
.pick {
  display: flex;
  align-items: center;
}
.pick-instrument {
  width: 70px;
}
.pick-interval {
  width: 61px;
}
.pick select {
  flex: 1;
  min-width: 0;
  padding: 0 0 0 4px;
  border: 0;
  appearance: none;
  background: none;
  color: #111;
  font: 11px/16px "Open Sans", sans-serif;
}
.caret {
  width: 5px;
  height: 3px;
  margin: 0 4px 0 1px;
  background: #111;
  clip-path: polygon(0 0, 100% 0, 50% 100%);
}
.tool {
  display: flex;
  align-items: center;
  justify-content: center;
  width: 23px;
  height: 22px;
  padding: 0;
  border: 0;
  background: none;
}
.tool svg {
  width: 16px;
  height: 16px;
}
.tool.split {
  width: 29px;
}
.tool .caret {
  margin: 0 2px;
}
.chart {
  display: grid;
  flex: 1;
  grid-template-columns: minmax(0, 1fr) 62px;
  grid-template-rows: 470fr 157fr 132fr 27px;
  background: #000;
  color: #c0c0c0;
}
.panel {
  position: relative;
  min-height: 0;
}
.plot {
  display: block;
  position: absolute;
  inset: 0;
  width: 100%;
  height: 100%;
}
.ruled::before {
  content: "";
  position: absolute;
  inset: 0 0 auto;
  height: 1px;
  background: #c0c0c0;
}
.caption {
  position: absolute;
  top: 5px;
  left: 3px;
  margin: 0;
  line-height: 14px;
  white-space: nowrap;
}
.caption-lower {
  top: 11px;
}
.copyright {
  top: auto;
  bottom: 0;
}
.axis {
  position: relative;
  border-left: 1px solid #c0c0c0;
}
.axis-first {
  border-image: linear-gradient(transparent 5px, #c0c0c0 5px) 1;
}
.tick,
.tag {
  position: absolute;
  left: 0;
  height: 14px;
  line-height: 14px;
  transform: translateY(-50%);
}
.tick {
  padding-left: 7px;
}
.tick::before {
  content: "";
  position: absolute;
  top: 7px;
  left: 0;
  width: 6px;
  height: 1px;
  background: #c0c0c0;
}
.tag {
  min-width: 30px;
  padding: 0 1px 0 8px;
  background: #c0c0c0;
  clip-path: polygon(0 50%, 6px 0, 100% 0, 100% 100%, 6px 100%);
}
.tag::before {
  content: "";
  position: absolute;
  inset: 1px;
  background: var(--fill);
  clip-path: polygon(0 50%, 6px 0, 100% 0, 100% 100%, 6px 100%);
}
.tag b {
  position: relative;
  font-weight: 400;
}
.wide {
  padding-right: 8px;
}
.light { --fill: #d3d3d3; color: #000; }
.blue { --fill: #00f; color: #d8d8ff; }
.gray { --fill: #a9a9a9; color: #000; }
.orange { --fill: #ffa500; color: #000; }
.white { --fill: #fff; color: #000; }
.green { --fill: #008000; color: #fff; }
.times {
  position: relative;
}
.time {
  position: absolute;
  top: 0;
  padding-top: 6px;
  line-height: 14px;
  transform: translateX(-50%);
}
.time::before {
  content: "";
  position: absolute;
  top: 0;
  left: 50%;
  width: 1px;
  height: 6px;
  background: #c0c0c0;
}
.plot path,
.plot polyline,
.candle rect {
  fill: none;
  vector-effect: non-scaling-stroke;
}
.grid path {
  stroke: #696969;
  stroke-dasharray: 3 1;
  shape-rendering: crispEdges;
}
.band {
  stroke: #0000e0;
}
.mid {
  stroke: #808080;
}
.candle path,
.candle rect {
  stroke: #fff;
  shape-rendering: crispEdges;
}
.candle .r { fill: #8b0000; }
.candle .g { fill: #006400; }
.plot .weighted {
  stroke: #fff;
  stroke-width: 3;
  stroke-linejoin: round;
}
.plot .average {
  stroke: #ffa500;
  stroke-width: 4;
  stroke-linejoin: round;
  stroke-linecap: round;
}
.level,
.zero,
.overbought,
.oversold {
  shape-rendering: crispEdges;
}
.level { stroke: #fff; }
.zero { stroke: #c0c0c0; }
.overbought { stroke: #9acd32; }
.oversold { stroke: #9400d3; }
.bar { fill: #00f; }
.green-line { stroke: #007800; }
.orange-line { stroke: #f09b00; }
</style>
